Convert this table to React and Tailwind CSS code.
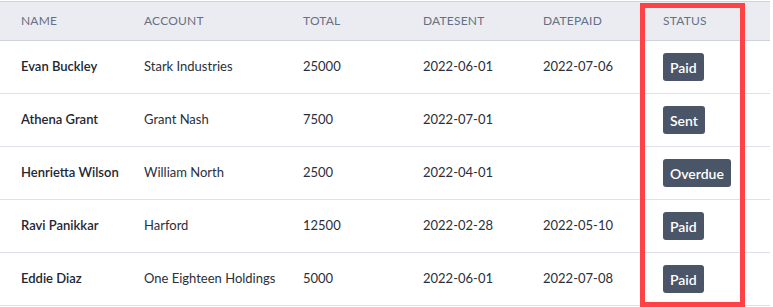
import React from "react";

const rows = [
  { name: "Evan Buckley", account: "Stark Industries", total: "25000", sent: "2022-06-01", paid: "2022-07-06", status: "Paid" },
  { name: "Athena Grant", account: "Grant Nash", total: "7500", sent: "2022-07-01", paid: "", status: "Sent" },
  { name: "Henrietta Wilson", account: "William North", total: "2500", sent: "2022-04-01", paid: "", status: "Overdue" },
  { name: "Ravi Panikkar", account: "Harford", total: "12500", sent: "2022-02-28", paid: "2022-05-10", status: "Paid" },
  { name: "Eddie Diaz", account: "One Eighteen Holdings", total: "5000", sent: "2022-06-01", paid: "2022-07-08", status: "Paid" },
];

const cols = "grid grid-cols-[123px_159px_120px_120px_120px_128px]";

export default function App() {
  return (
    <div className="relative w-[773px] h-[307px] bg-white text-[13px] text-[#1f2937]" style={{ fontFamily: "Lato, 'Noto Sans', sans-serif" }}>
      <div className="pt-px w-[770px]">
        <div className={`${cols} h-[40px] items-center bg-[#ebecf2] border-y border-[#cfd2dc] text-[12px] text-[#667085] tracking-[0.2px]`}>
          <div className="pl-[21px]">NAME</div>
          <div className="pl-[21px]">ACCOUNT</div>
          <div className="pl-[21px]">TOTAL</div>
          <div className="pl-[21px]">DATESENT</div>
          <div className="pl-[21px]">DATEPAID</div>
          <div className="pl-[21px]">STATUS</div>
        </div>
        {rows.map((r) => (
          <div key={r.name} className={`${cols} h-[53px] items-center border-b border-[#dfe1e7]`}>
            <div className="pl-[21px] font-semibold text-[#222733]">{r.name}</div>
            <div className="pl-[21px] text-[#2a2f3a]">{r.account}</div>
            <div className="pl-[21px] text-[#2a2f3a]">{r.total}</div>
            <div className="pl-[21px] text-[#2a2f3a]">{r.sent}</div>
            <div className="pl-[21px] text-[#2a2f3a]">{r.paid}</div>
            <div className="pl-[21px]">
              <span className="inline-flex h-[28px] items-center px-[7px] rounded-[3px] bg-[#4a5568] text-white text-[14px] font-semibold">{r.status}</span>
            </div>
          </div>
        ))}
      </div>
      <div className="absolute left-[640px] top-[3px] w-[105px] h-[304px] border-[5px] border-[#ff4245] pointer-events-none" />
    </div>
  );
}
